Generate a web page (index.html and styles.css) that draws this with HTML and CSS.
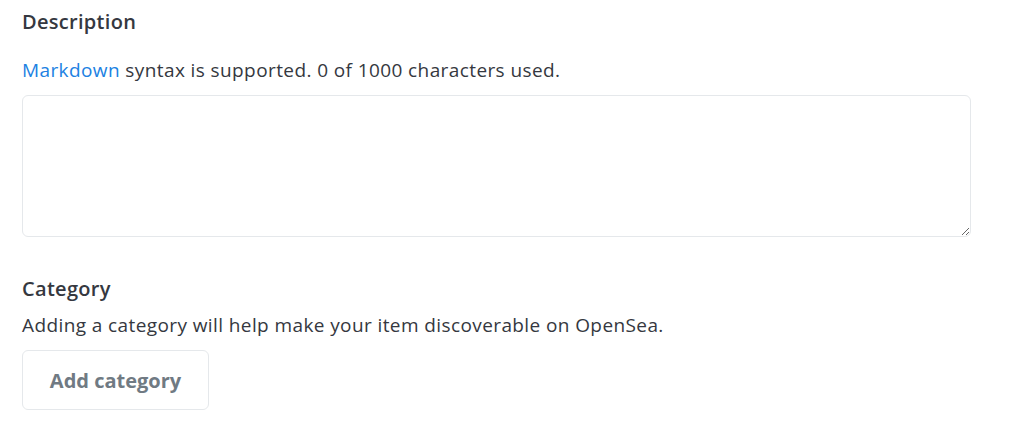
FILE: index.html
```html
<!DOCTYPE html>
<html lang="en">
<head>
<meta charset="utf-8">
<title>Item form</title>
<link rel="stylesheet" href="styles.css">
</head>
<body>
<main class="form">
  <section class="field field-description">
    <h2 class="field-label">Description</h2>
    <p class="field-hint"><a class="link" href="#">Markdown</a> syntax is supported. 0 of 1000 characters used.</p>
    <textarea class="textarea" aria-label="Description"></textarea>
  </section>
  <section class="field field-category">
    <h2 class="field-label">Category</h2>
    <p class="field-hint hint-tight">Adding a category will help make your item discoverable on OpenSea.</p>
    <button class="btn-outline" type="button">Add category</button>
  </section>
</main>
</body>
</html>
```
FILE: styles.css
```css
* { box-sizing: border-box; }
html, body { margin: 0; padding: 0; background: #ffffff; }
body {
  font-family: "Open Sans", "Liberation Sans", sans-serif;
  color: #353840;
}
.form {
  display: flex;
  flex-direction: column;
  padding: 8px 22px 0 22px;
}
.field { display: flex; flex-direction: column; align-items: flex-start; }
.field-category { margin-top: 38px; }
.field-label {
  margin: 0;
  font-size: 20px;
  line-height: 28px;
  font-weight: 600;
  letter-spacing: 0.3px;
  color: #353840;
}
.field-hint {
  margin: 21px 0 0 0;
  font-size: 19px;
  line-height: 26px;
  font-weight: 400;
  letter-spacing: 0.4px;
  color: #353840;
}
.hint-tight { margin-top: 9px; }
.link { color: #2081e2; text-decoration: none; }
.textarea {
  margin-top: 12px;
  width: 949px;
  height: 142px;
  border: 1px solid #e5e8eb;
  border-radius: 6px;
  background: #fff;
  resize: vertical;
  font-family: inherit;
  font-size: 16px;
  padding: 12px;
  outline: none;
}
.btn-outline {
  margin-top: 12px;
  width: 187px;
  height: 60px;
  border: 1px solid #e5e8eb;
  border-radius: 6px;
  background: #fff;
  font-family: inherit;
  font-size: 20px;
  font-weight: 700;
  color: #707a83;
  padding: 0;
  cursor: pointer;
}
```
